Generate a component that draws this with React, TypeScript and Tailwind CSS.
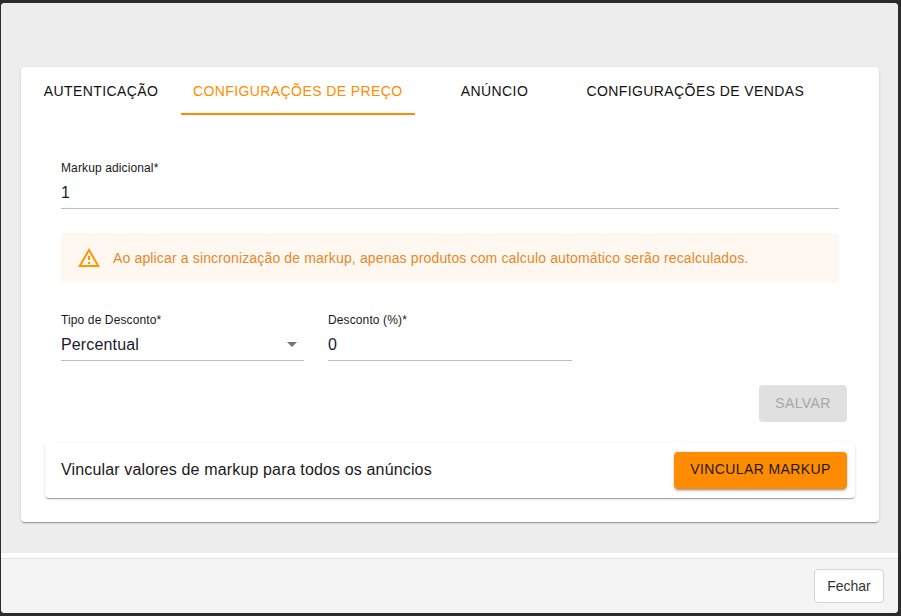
import React from 'react';

const tabs = [
  { label: 'Autenticação', active: false },
  { label: 'Configurações de preço', active: true },
  { label: 'Anúncio', active: false },
  { label: 'Configurações de vendas', active: false },
];

const elevation =
  'shadow-[0_2px_1px_-1px_rgba(0,0,0,0.2),0_1px_1px_0_rgba(0,0,0,0.14),0_1px_3px_0_rgba(0,0,0,0.12)]';

const Field: React.FC<{ label: string; value: string; arrow?: boolean; className?: string }> = ({
  label,
  value,
  arrow,
  className,
}) => (
  <div className={className}>
    <label className="block h-4 text-xs leading-4 tracking-[0.12px] text-[#1a1a1a]">{label}</label>
    <div className="flex h-[33px] items-center justify-between border-b border-[#bdbdbd] text-base tracking-[0.15px] text-[#1a1a2e]">
      <span className="mt-[2px]">{value}</span>
      {arrow && (
        <svg width="24" height="24" viewBox="0 0 24 24" className="fill-[#757575]">
          <path d="M7 10l5 5 5-5z" />
        </svg>
      )}
    </div>
  </div>
);

const App: React.FC = () => {
  return (
    <div className="h-[616px] w-[901px] overflow-hidden bg-[#2c2c2c] pt-[3px] pr-[3px] pb-[3px] pl-[1px] font-['Liberation_Sans',sans-serif]">
      <div className="flex h-[610px] flex-col overflow-hidden rounded-[4px] bg-white">
        <div className="h-[550px] bg-[#ededed] pt-16 pr-[19px] pl-5">
          <div className={`h-[455px] rounded-[4px] bg-white ${elevation}`}>
            <div className="flex h-12">
              {tabs.map((tab) => (
                <div
                  key={tab.label}
                  className={`flex h-12 min-w-[160px] items-center justify-center border-b-2 px-3 pt-[2px] text-sm tracking-[0.4px] uppercase ${
                    tab.active ? 'border-[#ff8c00] text-[#ff8c00]' : 'border-transparent text-[#111]'
                  }`}
                >
                  {tab.label}
                </div>
              ))}
            </div>

            <div className="px-10 pt-[45px]">
              <Field label="Markup adicional*" value="1" />

              <div className="mt-6 flex h-[50px] items-center gap-3 rounded-[4px] bg-[#fff8f0] pl-4 text-sm tracking-[0.15px] text-[#e8872a]">
                <svg width="24" height="24" viewBox="0 0 24 24" className="fill-[#ff9800]">
                  <path d="M12 5.99L19.53 19H4.47L12 5.99M12 2L1 21h22L12 2zm1 14h-2v2h2v-2zm0-6h-2v4h2v-4z" />
                </svg>
                <span>Ao aplicar a sincronização de markup, apenas produtos com calculo automático serão recalculados.</span>
              </div>

              <div className="mt-[29px] flex gap-6">
                <Field label="Tipo de Desconto*" value="Percentual" arrow className="w-[243px]" />
                <Field label="Desconto (%)*" value="0" className="w-[244px]" />
              </div>
            </div>

            <div className="mt-6 flex justify-end pr-8">
              <button className="h-[37px] w-[88px] rounded-[4px] bg-[#e0e0e0] pb-[2px] text-sm tracking-[0.4px] text-[#a6a6a6] uppercase">
                Salvar
              </button>
            </div>

            <div className={`mx-6 mt-5 flex h-14 items-center justify-between rounded-[4px] bg-white pr-2 pl-4 ${elevation}`}>
              <span className="text-base tracking-[0.15px] text-[#1a1a1a]">Vincular valores de markup para todos os anúncios</span>
              <button className="h-[37px] w-[173px] rounded-[4px] bg-[#ff8c00] pb-[2px] text-sm tracking-[0.4px] text-[#1a1a1a] uppercase shadow-[0_3px_1px_-2px_rgba(0,0,0,0.2),0_2px_2px_0_rgba(0,0,0,0.14),0_1px_5px_0_rgba(0,0,0,0.12)]">
                Vincular markup
              </button>
            </div>
          </div>
        </div>

        <div className="mt-[5px] flex h-[55px] items-start justify-end border-t border-[#e3e3e3] bg-[#f4f4f4] pt-[10px] pr-[14px]">
          <button className="h-[34px] w-[70px] rounded-[4px] border border-[#d4d4d4] bg-white text-sm text-[#333]">
            Fechar
          </button>
        </div>
      </div>
    </div>
  );
};

export default App;
